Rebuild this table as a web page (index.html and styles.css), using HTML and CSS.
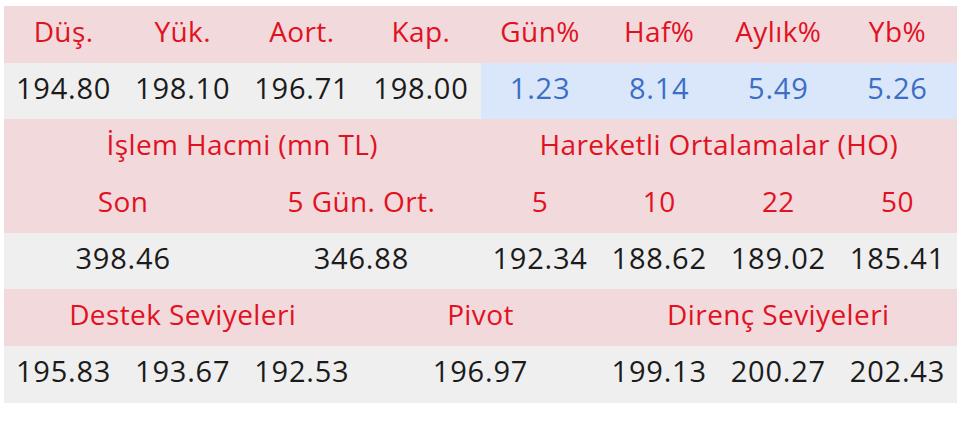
FILE: index.html
```html
<!DOCTYPE html>
<html lang="tr">
<head>
<meta charset="utf-8">
<title>Hisse Özeti</title>
<link rel="stylesheet" href="styles.css">
</head>
<body>
<table class="summary">
  <colgroup>
    <col><col><col><col><col><col><col><col>
  </colgroup>
  <tr class="head">
    <th>Düş.</th><th>Yük.</th><th>Aort.</th><th>Kap.</th>
    <th>Gün%</th><th>Haf%</th><th>Aylık%</th><th>Yb%</th>
  </tr>
  <tr class="vals">
    <td>194.80</td><td>198.10</td><td>196.71</td><td>198.00</td>
    <td class="pct">1.23</td><td class="pct">8.14</td><td class="pct">5.49</td><td class="pct">5.26</td>
  </tr>
  <tr class="head">
    <th colspan="4">İşlem Hacmi (mn TL)</th>
    <th colspan="4">Hareketli Ortalamalar (HO)</th>
  </tr>
  <tr class="head">
    <th colspan="2">Son</th><th colspan="2">5 Gün. Ort.</th>
    <th>5</th><th>10</th><th>22</th><th>50</th>
  </tr>
  <tr class="vals">
    <td colspan="2">398.46</td><td colspan="2">346.88</td>
    <td>192.34</td><td>188.62</td><td>189.02</td><td>185.41</td>
  </tr>
  <tr class="head">
    <th colspan="3">Destek Seviyeleri</th><th colspan="2">Pivot</th><th colspan="3">Direnç Seviyeleri</th>
  </tr>
  <tr class="vals">
    <td>195.83</td><td>193.67</td><td>192.53</td>
    <td colspan="2">196.97</td>
    <td>199.13</td><td>200.27</td><td>202.43</td>
  </tr>
</table>
</body>
</html>
```
FILE: styles.css
```css
html, body {
  margin: 0;
  padding: 0;
  background: #ffffff;
}

body {
  padding: 6px 0 0 4px;
  font-family: "Open Sans", "Noto Sans", sans-serif;
}

.summary {
  width: 953px;
  table-layout: fixed;
  border-collapse: collapse;
  border-spacing: 0;
}

.summary th,
.summary td {
  box-sizing: border-box;
  height: 56.7px;
  padding: 0 0 6px 0;
  text-align: center;
  vertical-align: middle;
  font-size: 28px;
  line-height: 1.2;
  font-weight: 400;
  letter-spacing: 0.4px;
  white-space: nowrap;
}

.head th {
  background: #f1d9dc;
  color: #e1121f;
}

.vals td {
  background: #efefef;
  color: #1b1b1b;
  font-size: 29px;
  letter-spacing: 0.8px;
}

.vals td.pct {
  background: #dae7fb;
  color: #3b6ec6;
}
```
